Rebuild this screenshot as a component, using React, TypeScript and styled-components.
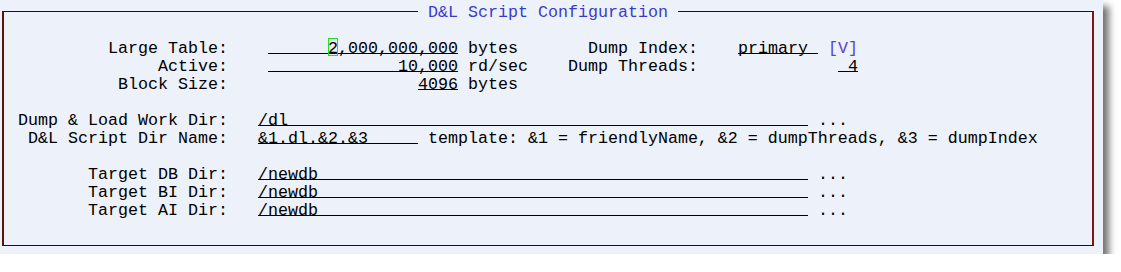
import React from "react";
import styled, { createGlobalStyle } from "styled-components";

const CELL = 10;

const GlobalStyle = createGlobalStyle`
  html, body { margin: 0; padding: 0; background: #ffffff; }
`;

const Screen = styled.div`
  width: 1103px;
  height: 254px;
  box-sizing: border-box;
  padding: 11px 0 0 2px;
  background: #edf1f9;
  box-shadow: 6px 6px 7px rgba(0, 0, 0, 0.55);
  font-family: "Courier New", "Nimbus Mono PS", "Nimbus Mono L", FreeMono, "Liberation Mono", monospace;
  font-size: 16.6667px;
  line-height: 21px;
  color: #000;
`;

const Panel = styled.section`
  position: relative;
  width: 1092px;
  height: 235px;
  box-sizing: border-box;
  border-top: 1px solid #1c1414;
  border-bottom: 1px solid #1c1414;
  border-left: 2px solid #5a140a;
  border-right: 2px solid #7a1a12;
  padding: 26px 0 27px 4px;
`;

const Title = styled.h1`
  position: absolute;
  top: -10px;
  left: 50%;
  transform: translateX(-50%);
  margin: 0;
  padding: 0 10px;
  height: 18px;
  background: #edf1f9;
  font: inherit;
  color: #3b3bcb;
  white-space: pre;
`;

const Row = styled.div`
  display: flex;
  height: 18px;
  white-space: pre;
`;

const Label = styled.span<{ $w: number }>`
  flex: none;
  width: ${(p) => p.$w * CELL}px;
  text-align: right;
`;

const Field = styled.span<{ $w: number; $ml?: number; $right?: boolean }>`
  flex: none;
  display: inline-block;
  height: 18px;
  width: ${(p) => p.$w * CELL}px;
  margin-left: ${(p) => (p.$ml ?? 0) * CELL}px;
  text-align: ${(p) => (p.$right ? "right" : "left")};
  background-image: linear-gradient(#000, #000);
  background-repeat: no-repeat;
  background-size: 100% 1px;
  background-position: 0 15px;
`;

const Unit = styled.span<{ $w?: number }>`
  flex: none;
  width: ${(p) => (p.$w ? `${p.$w * CELL}px` : "auto")};
`;

const Accent = styled.span<{ $ml?: number }>`
  flex: none;
  margin-left: ${(p) => (p.$ml ?? 0) * CELL}px;
  color: #5a44cc;
`;

const Cursor = styled.span`
  display: inline-block;
  width: 10px;
  height: 18px;
  box-sizing: border-box;
  vertical-align: top;
  line-height: 21px;
  box-shadow: inset 0 0 0 1px #1ee01e;
`;

const dirs = ["Target DB Dir:", "Target BI Dir:", "Target AI Dir:"];

export default function App() {
  return (
    <>
      <GlobalStyle />
      <Screen>
        <Panel>
          <Title>D&amp;L Script Configuration</Title>

          <Row>
            <Label $w={22}>Large Table:</Label>
            <Field $w={19} $ml={4} $right>
              <Cursor>2</Cursor>,000,000,000
            </Field>
            <Unit $w={7}> bytes</Unit>
            <Label $w={17}>Dump Index:</Label>
            <Field $w={8} $ml={4}>primary</Field>
            <Accent $ml={1}>[V]</Accent>
          </Row>
          <Row>
            <Label $w={22}>Active:</Label>
            <Field $w={19} $ml={4} $right>10,000</Field>
            <Unit $w={7}> rd/sec</Unit>
            <Label $w={17}>Dump Threads:</Label>
            <Field $w={2} $ml={14} $right>4</Field>
          </Row>
          <Row>
            <Label $w={22}>Block Size:</Label>
            <Field $w={4} $ml={19} $right>4096</Field>
            <Unit> bytes</Unit>
          </Row>
          <Row />
          <Row>
            <Label $w={22}>Dump &amp; Load Work Dir:</Label>
            <Field $w={55} $ml={3}>/dl</Field>
            <Unit> ...</Unit>
          </Row>
          <Row>
            <Label $w={22}>D&amp;L Script Dir Name:</Label>
            <Field $w={16} $ml={3}>&amp;1.dl.&amp;2.&amp;3</Field>
            <Unit> template: &amp;1 = friendlyName, &amp;2 = dumpThreads, &amp;3 = dumpIndex</Unit>
          </Row>
          <Row />
          {dirs.map((d) => (
            <Row key={d}>
              <Label $w={22}>{d}</Label>
              <Field $w={55} $ml={3}>/newdb</Field>
              <Unit> ...</Unit>
            </Row>
          ))}
        </Panel>
      </Screen>
    </>
  );
}
